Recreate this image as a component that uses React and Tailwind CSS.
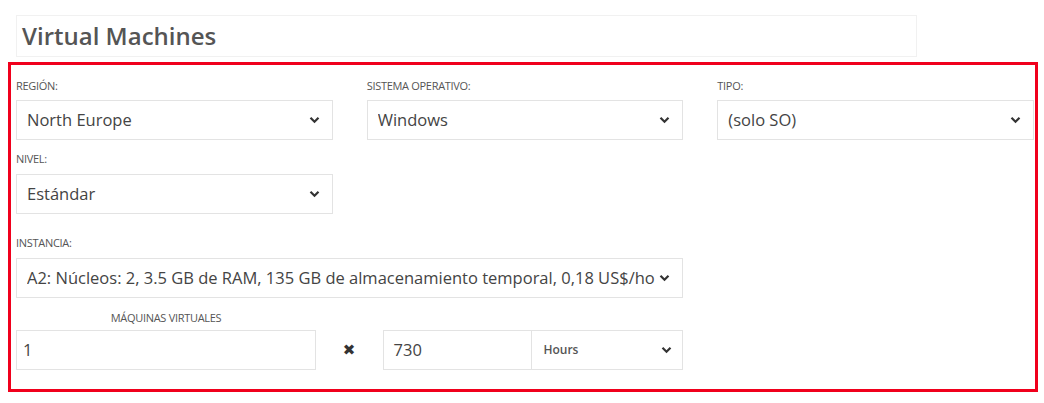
import React from 'react';

const font = { fontFamily: '"Open Sans", "Noto Sans", sans-serif' };

const Chevron = () => (
  <svg width="11" height="8" viewBox="0 0 11 8" className="shrink-0">
    <path d="M1.5 1.8 L5.5 5.8 L9.5 1.8" fill="none" stroke="#333" strokeWidth="2.2" />
  </svg>
);

const Label = ({ children, className = '' }) => (
  <div className={`h-4 text-[11px] leading-4 uppercase text-[#555] tracking-[-0.3px] ${className}`}>{children}</div>
);

const Select = ({ value, className = '' }) => (
  <div className={`h-10 border border-[#e3e3e3] bg-white flex items-center pl-[10px] pr-[12px] gap-[4px] ${className}`}>
    <span className="flex-1 min-w-0 overflow-hidden whitespace-nowrap text-[16.5px] text-[#444]">{value}</span>
    <Chevron />
  </div>
);

const App = () => {
  return (
    <div className="w-[1044px] h-[403px] bg-white" style={font}>
      <div className="pt-[15px] pl-[16px]">
        <div className="w-[901px] h-[42px] border border-[#f1f1f1] flex items-center pl-[5px]">
          <h1 className="text-[24px] font-semibold text-[#555] leading-none">Virtual Machines</h1>
        </div>
      </div>

      <div className="mt-[5px] ml-[8px] w-[1030px] h-[330px] border-[3px] border-[#f0001c] pl-[5px] pr-[1px] pt-[13px]">
        <div className="grid grid-cols-3 gap-x-[34px]">
          <div>
            <Label>Región:</Label>
            <Select value="North Europe" className="mt-[6px]" />
          </div>
          <div>
            <Label>Sistema operativo:</Label>
            <Select value="Windows" className="mt-[6px]" />
          </div>
          <div>
            <Label>Tipo:</Label>
            <Select value="(solo SO)" className="mt-[6px]" />
          </div>

          <div className="mt-[11px]">
            <Label>Nivel:</Label>
            <Select value="Estándar" className="mt-[7px]" />
          </div>
          <div />
          <div />

          <div className="col-span-2 mt-[21px]">
            <Label>Instancia:</Label>
            <Select
              value="A2: Núcleos: 2, 3.5 GB de RAM, 135 GB de almacenamiento temporal, 0,18 US$/hora"
              className="mt-[7px]"
            />
            <div className="w-[300px] text-center mt-[12px]">
              <Label className="text-[10.5px]">Máquinas virtuales</Label>
            </div>
            <div className="flex items-center mt-[4px]">
              <div className="w-[300px] h-10 border border-[#e3e3e3] flex items-center pl-[6px] text-[16.5px] text-[#444]">1</div>
              <div className="w-[67px] flex justify-center items-center text-[#333] text-[15px]" style={{ fontFamily: '"DejaVu Sans", sans-serif' }}>
                ✖
              </div>
              <div className="w-[150px] h-10 border border-[#e3e3e3] flex items-center pl-[10px] text-[16.5px] text-[#444]">730</div>
              <div className="w-[151px] h-10 border border-l-0 border-[#e3e3e3] flex items-center pl-[11px] pr-[10px]">
                <span className="flex-1 text-[12px] font-semibold text-[#555]">Hours</span>
                <Chevron />
              </div>
            </div>
          </div>
        </div>
      </div>
    </div>
  );
};

export default App;
